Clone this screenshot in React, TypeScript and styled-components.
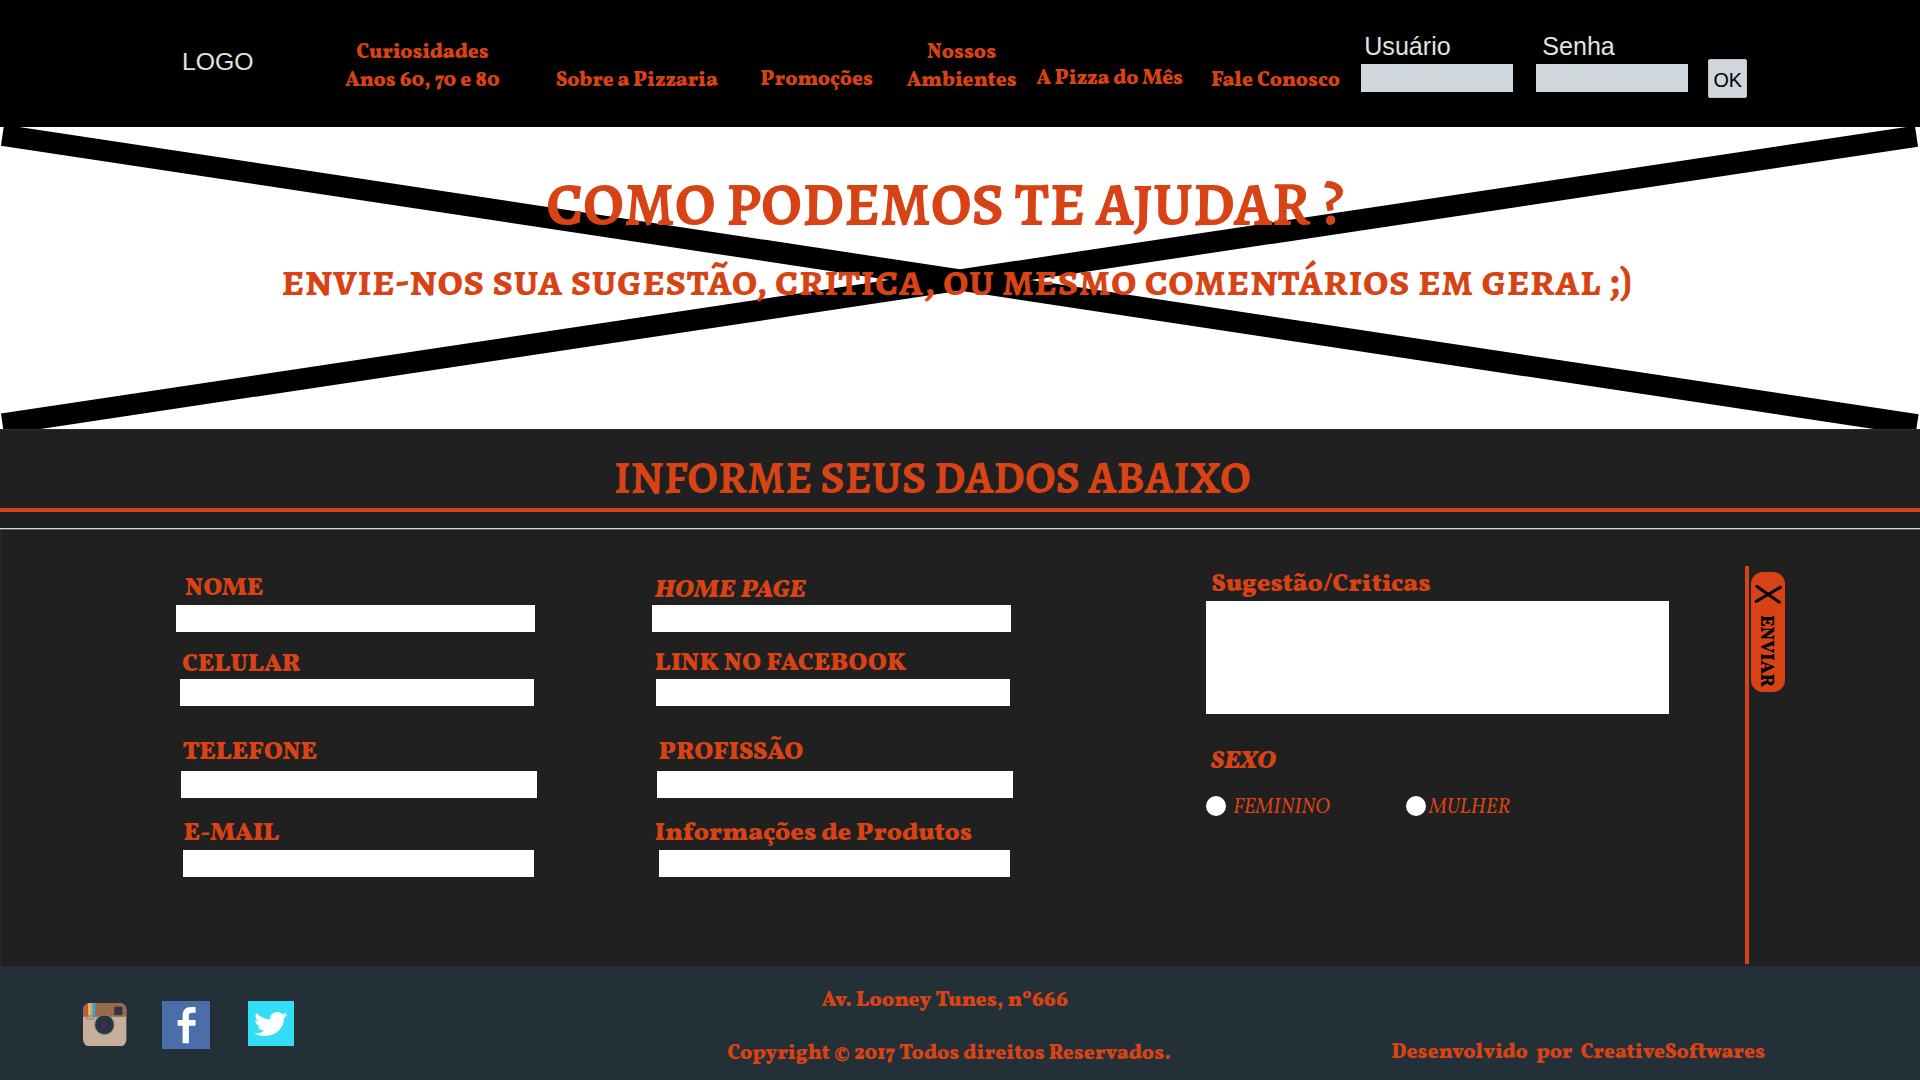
import React from "react";
import styled, { createGlobalStyle } from "styled-components";
import { FaTwitter } from "react-icons/fa";

const orange = "#d84315";
const vollkorn = `"Vollkorn", "Noto Serif", "Liberation Serif", serif`;
const alegreya = `"Alegreya", "Noto Serif", "Liberation Serif", serif`;
const alegreyaSC = `"Alegreya SC", "Noto Serif", "Liberation Serif", serif`;
const sans = `"Liberation Sans", Arial, sans-serif`;

const GlobalStyle = createGlobalStyle`
  *, *::before, *::after { box-sizing: border-box; }
  body { margin: 0; background: #202020; }
  h1, h2, p { margin: 0; }
  input, textarea, button { margin: 0; padding: 0; border: 0; outline: 0; border-radius: 0; }
`;

const Page = styled.div`
  display: flex;
  flex-direction: column;
  width: 1920px;
  height: 1080px;
  overflow: hidden;
  color: ${orange};
  font-family: ${vollkorn};
`;

const Header = styled.header`
  display: flex;
  align-items: flex-start;
  flex: none;
  height: 127px;
  padding-left: 182px;
  background: #000;
`;

const Logo = styled.span`
  flex: none;
  width: 72px;
  margin-top: 47.6px;
  font: 24.8px/28px ${sans};
  color: #e2e2e2;
`;

const Nav = styled.nav`
  display: flex;
  flex: none;
  align-items: flex-start;
`;

const NavLink = styled.a<{ $gap: number; $width: number; $top: number; $spacing?: number }>`
  display: flex;
  flex-direction: column;
  align-items: center;
  flex: none;
  width: ${(p) => p.$width}px;
  margin: ${(p) => p.$top}px 0 0 ${(p) => p.$gap}px;
  font-size: 20.2px;
  font-weight: 900;
  letter-spacing: ${(p) => p.$spacing || 0}px;
  line-height: 28px;
  white-space: nowrap;
`;

const Login = styled.form`
  display: flex;
  align-items: flex-start;
  flex: none;
  margin-left: 20.7px;
`;

const LoginField = styled.label<{ $indent: number }>`
  display: flex;
  flex-direction: column;
  gap: 4px;
  width: 151.5px;
  margin: 32.4px 23.5px 0 0;
  font: 25.1px/28px ${sans};
  color: #e2e2e2;
  text-indent: ${(p) => p.$indent}px;
`;

const LoginInput = styled.input`
  width: 100%;
  height: 28px;
  background: #cfd6dc;
`;

const OkButton = styled.button`
  width: 39px;
  height: 39px;
  margin: 59px 0 0 -3px;
  border: 1px solid #bcc4ca;
  border-radius: 2px;
  background: #cfd6dc;
  color: #000;
  font: 19.8px/41px ${sans};
`;

const Banner = styled.section`
  position: relative;
  flex: none;
  height: 302px;
  padding-top: 46px;
  background: #fff;
`;

const Cross = styled.svg`
  position: absolute;
  inset: 0;
  width: 1920px;
  height: 302px;
`;

const Title = styled.h1`
  position: relative;
  padding-left: 546.2px;
  font: 700 60.6px/64px ${alegreya};
  white-space: nowrap;
`;

const Subtitle = styled.p`
  position: relative;
  margin-top: 18.4px;
  padding-left: 281.3px;
  font: 700 45.5px/50px ${alegreyaSC};
  white-space: nowrap;
`;

const FormHeading = styled.h2`
  flex: none;
  height: 83px;
  padding: 23px 0 0 614px;
  border-top: 1px solid #2b302f;
  border-bottom: 4px solid ${orange};
  background: #202020;
  font: 700 45.43px/50px ${alegreya};
  white-space: nowrap;
`;

const Rule = styled.div`
  flex: none;
  height: 18px;
  border-bottom: 1px solid #5c5f5e;
  background: linear-gradient(#202020 16px, #d3d6d5 16px);
`;

const FormArea = styled.form`
  display: flex;
  align-items: flex-start;
  flex: none;
  height: 436px;
  padding-left: 175px;
  border-left: 1px solid #2a2a2a;
  background: #202020;
`;

const Column = styled.div<{ $width: number; $top: number }>`
  display: flex;
  flex-direction: column;
  flex: none;
  width: ${(p) => p.$width}px;
  padding-top: ${(p) => p.$top}px;
`;

const Field = styled.label<{ $gap: number }>`
  display: flex;
  flex-direction: column;
  margin-top: ${(p) => p.$gap}px;
`;

const FieldLabel = styled.span<{ $indent: number; $italic?: boolean; $spacing?: number }>`
  padding-left: ${(p) => p.$indent}px;
  font-size: ${(p) => (p.$italic ? 25.4 : 25.15)}px;
  font-style: ${(p) => (p.$italic ? "italic" : "normal")};
  font-weight: 900;
  letter-spacing: ${(p) => p.$spacing || 0}px;
  line-height: 28px;
  white-space: nowrap;
`;

const FieldInput = styled.input<{ $indent: number; $width: number; $top: number }>`
  width: ${(p) => p.$width}px;
  height: 27.4px;
  margin: ${(p) => p.$top}px 0 0 ${(p) => p.$indent}px;
  background: #fff;
`;

const Message = styled.textarea`
  width: 463px;
  height: 113.4px;
  margin-top: 2.4px;
  background: #fff;
  resize: none;
`;

const GenderLabel = styled(FieldLabel)`
  margin-top: 34px;
`;

const Radios = styled.div`
  display: flex;
  margin-top: 19.7px;
`;

const RadioOption = styled.label<{ $gap: number }>`
  display: flex;
  align-items: flex-start;
  gap: ${(p) => p.$gap}px;
  width: 200px;
  font-size: 20.15px;
  font-style: italic;
  font-weight: 400;
  line-height: 20px;
`;

const RadioDot = styled.input`
  appearance: none;
  flex: none;
  width: 20.4px;
  height: 20.4px;
  border-radius: 50%;
  background: #fff;
`;

const RadioText = styled.span`
  margin-top: 1.5px;
`;

const Submit = styled.div`
  flex: none;
  height: 398px;
  margin-top: 36px;
  padding: 6px 0 0 2px;
  border-left: 4px solid ${orange};
`;

const SubmitButton = styled.button`
  display: flex;
  flex-direction: column;
  align-items: center;
  width: 34px;
  height: 120px;
  padding-top: 12px;
  border-radius: 12px;
  background: ${orange};
  color: #000;
`;

const SubmitText = styled.span`
  margin: 10.5px 5px 0 0;
  font: 800 18.6px/34px ${vollkorn};
  writing-mode: vertical-rl;
`;

const Footer = styled.footer`
  display: flex;
  align-items: flex-start;
  flex: none;
  height: 114px;
  padding-left: 83px;
  background: #243038;
`;

const SocialLink = styled.a<{ $top: number; $gap: number; $size: number; $color?: string }>`
  display: flex;
  align-items: center;
  justify-content: center;
  flex: none;
  width: ${(p) => p.$size}px;
  height: ${(p) => p.$size - 0.5}px;
  margin: ${(p) => p.$top}px ${(p) => p.$gap}px 0 0;
  background: ${(p) => p.$color || "none"};
  color: #fff;
`;

const FooterInfo = styled.div`
  display: flex;
  flex-direction: column;
  align-items: flex-start;
  gap: 25.3px;
  width: 664.3px;
  padding-top: 20.8px;
`;

const FooterText = styled.p<{ $indent?: number; $size?: number; $top?: number }>`
  margin-top: ${(p) => p.$top || 0}px;
  padding-left: ${(p) => p.$indent || 0}px;
  font-size: ${(p) => p.$size || 20.2}px;
  font-weight: 900;
  line-height: 28px;
  white-space: pre;
`;

const navItems = [
  { lines: ["Curiosidades", "Anos 60, 70 e 80"], gap: 91, width: 155, top: 39.1 },
  { lines: ["Sobre a Pizzaria"], gap: 56.4, width: 161, top: 67.1, spacing: -0.1 },
  { lines: ["Promoções"], gap: 43.4, width: 112, top: 66.1 },
  { lines: ["Nossos", "Ambientes"], gap: 34.2, width: 109.5, top: 39.1 },
  { lines: ["A Pizza do Mês"], gap: 20.2, width: 146, top: 65, spacing: -0.08 },
  { lines: ["Fale Conosco"], gap: 27.9, width: 130, top: 67.1 },
];

const contactFields = [
  { label: "NOME", gap: 0, indent: 9.3, top: 2.4, inputIndent: 0, width: 359 },
  { label: "CELULAR", gap: 18.9, indent: 6.1, top: -0.4, inputIndent: 4, width: 354 },
  { label: "TELEFONE", gap: 33.1, indent: 6.2, top: 3.5, inputIndent: 5, width: 356 },
  { label: "E-MAIL", gap: 22.1, indent: 7.7, top: 1.5, inputIndent: 7, width: 351 },
];

const profileFields = [
  { label: "HOME PAGE", italic: true, gap: 0, indent: 2.6, top: -0.3, inputIndent: 0, width: 359, spacing: 0.2 },
  { label: "LINK NO FACEBOOK", gap: 17.2, indent: 2.7, top: 1.4, inputIndent: 4, width: 354, spacing: 0.15 },
  { label: "PROFISSÃO", gap: 33.1, indent: 6.8, top: 3.5, inputIndent: 5, width: 356, spacing: -0.05 },
  { label: "Informações de Produtos", gap: 21.6, indent: 2.7, top: 2, inputIndent: 7, width: 351, spacing: -0.05 },
];

type FieldData = {
  label: string;
  italic?: boolean;
  gap: number;
  indent: number;
  top: number;
  inputIndent: number;
  width: number;
  spacing?: number;
};

function FieldList({ fields }: { fields: FieldData[] }) {
  return (
    <>
      {fields.map((f) => (
        <Field key={f.label} $gap={f.gap}>
          <FieldLabel $indent={f.indent} $italic={f.italic} $spacing={f.spacing}>{f.label}</FieldLabel>
          <FieldInput $indent={f.inputIndent} $width={f.width} $top={f.top} />
        </Field>
      ))}
    </>
  );
}

function InstagramIcon() {
  return (
    <svg width="43.5" height="43.5" viewBox="0 0 43.8 43.5" preserveAspectRatio="none">
      <defs>
        <clipPath id="camera-body">
          <rect width="43.8" height="43.5" rx="7" />
        </clipPath>
      </defs>
      <g clipPath="url(#camera-body)">
        <rect width="44" height="44" fill="#c6ae9b" />
        <rect width="44" height="13.8" fill="#9a6b48" />
        <rect x="3" width="2.4" height="13" fill="#ee3f4d" />
        <rect x="5.4" width="2.3" height="13" fill="#f5cf4b" />
        <rect x="7.7" width="2.2" height="13" fill="#84c77b" />
        <rect x="9.9" width="2.6" height="13" fill="#4a8ff2" />
      </g>
      <rect x="3.8" y="13" width="7.4" height="3" rx="1" fill="#c6ae9b" stroke="#7d6a5c" strokeWidth="0.8" />
      <rect x="31.3" y="3.7" width="8.4" height="8.4" rx="1" fill="#22364a" stroke="#70503b" strokeWidth="0.6" />
      <circle cx="35.5" cy="7.8" r="2.4" fill="#472a48" />
      <circle cx="21.6" cy="21.8" r="9.8" fill="#22364a" stroke="#9c8676" strokeWidth="0.9" />
      <circle cx="21.6" cy="21.8" r="4.8" fill="#472a48" stroke="#1a2b3a" strokeWidth="0.6" />
    </svg>
  );
}

function FacebookIcon() {
  return (
    <svg width="49" height="48.5" viewBox="0 0 49 48.5">
      <path
        d="M20.7 42.3V24.7H15.7V19H20.7V15C20.7 9 23.8 6 29 6H33.7V11.7H30.5C27.8 11.7 27 12.8 27 15V19H33.7V24.7H27V42.3Z"
        fill="#fff"
      />
    </svg>
  );
}

const Bird = styled(FaTwitter)`
  width: 33.4px;
  height: 24px;
  margin-top: 1px;
`;

export default function App() {
  return (
    <Page>
      <GlobalStyle />
      <Header>
        <Logo>LOGO</Logo>
        <Nav>
          {navItems.map((item) => (
            <NavLink key={item.lines[0]} $gap={item.gap} $width={item.width} $top={item.top} $spacing={item.spacing}>
              {item.lines.map((line) => (
                <span key={line}>{line}</span>
              ))}
            </NavLink>
          ))}
        </Nav>
        <Login>
          <LoginField $indent={3}>
            Usuário
            <LoginInput />
          </LoginField>
          <LoginField $indent={6}>
            Senha
            <LoginInput type="password" />
          </LoginField>
          <OkButton type="button">OK</OkButton>
        </Login>
      </Header>

      <Banner>
        <Cross viewBox="0 0 1920 302" aria-hidden>
          <path d="M2.5 8.2L1917 297.8M2.5 297L1916.5 9.2" stroke="#000" strokeWidth="21.2" />
        </Cross>
        <Title>COMO PODEMOS TE AJUDAR ?</Title>
        <Subtitle>envie-nos sua sugestão, critica, ou mesmo comentários em geral ;)</Subtitle>
      </Banner>

      <FormHeading>INFORME SEUS DADOS ABAIXO</FormHeading>
      <Rule />

      <FormArea>
        <Column $width={476} $top={44.6}>
          <FieldList fields={contactFields} />
        </Column>
        <Column $width={554} $top={47.3}>
          <FieldList fields={profileFields} />
        </Column>
        <Column $width={539} $top={40.6}>
          <Field $gap={0}>
            <FieldLabel $indent={5.4} $spacing={0.06}>Sugestão/Criticas</FieldLabel>
            <Message />
          </Field>
          <GenderLabel $indent={4.8} $italic $spacing={-0.2}>SEXO</GenderLabel>
          <Radios>
            <RadioOption $gap={6.6}>
              <RadioDot type="radio" name="sexo" />
              <RadioText>FEMININO</RadioText>
            </RadioOption>
            <RadioOption $gap={2.5}>
              <RadioDot type="radio" name="sexo" />
              <RadioText>MULHER</RadioText>
            </RadioOption>
          </Radios>
        </Column>
        <Submit>
          <SubmitButton type="button">
            <svg width="28" height="20" viewBox="0 0 28 20">
              <path d="M2.9 2.4L25.4 18.2M2.2 17.4L26.4 3.4" stroke="#000" strokeWidth="3" strokeLinecap="round" />
            </svg>
            <SubmitText>ENVIAR</SubmitText>
          </SubmitButton>
        </Submit>
      </FormArea>

      <Footer>
        <SocialLink $top={37} $gap={35} $size={43.5}>
          <InstagramIcon />
        </SocialLink>
        <SocialLink $top={35} $gap={37.8} $size={48.8} $color="#4a6ea9">
          <FacebookIcon />
        </SocialLink>
        <SocialLink $top={35} $gap={433.6} $size={45.6} $color="#32def6">
          <Bird viewBox="0 48 512 416" preserveAspectRatio="none" />
        </SocialLink>
        <FooterInfo>
          <FooterText $indent={94.5} $size={20.6}>Av. Looney Tunes, nº666</FooterText>
          <FooterText $size={20.23}>Copyright © 2017 Todos direitos Reservados.</FooterText>
        </FooterInfo>
        <FooterText $top={72.8}>Desenvolvido  por  CreativeSoftwares</FooterText>
      </Footer>
    </Page>
  );
}
